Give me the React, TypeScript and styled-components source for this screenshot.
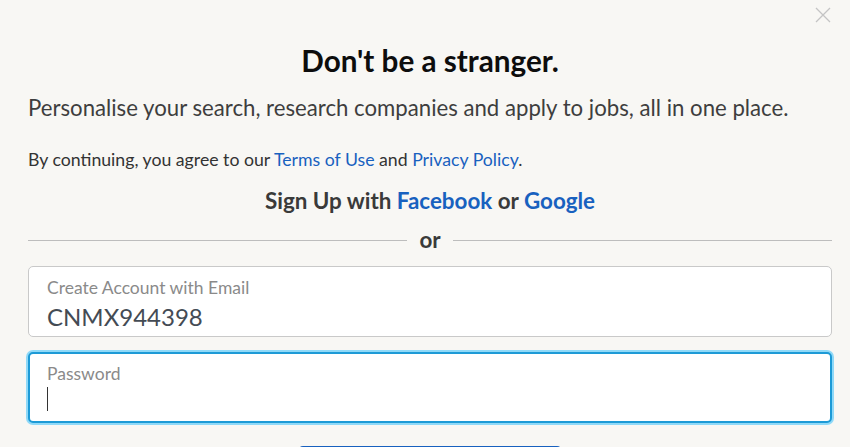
import styled, { createGlobalStyle } from "styled-components";

const GlobalStyle = createGlobalStyle`
  html, body {
    margin: 0;
    padding: 0;
    background: #f8f7f4;
    font-family: Lato, "Open Sans", sans-serif;
    overflow: hidden;
  }
`;

const Modal = styled.div`
  position: relative;
  height: 447px;
  overflow: hidden;
  padding: 0 18px 0 28px;
  box-sizing: border-box;
  display: flex;
  flex-direction: column;
`;

const Close = styled.button`
  position: absolute;
  top: 6px;
  right: 18px;
  width: 18px;
  height: 18px;
  padding: 0;
  border: none;
  background: none;
  display: flex;
`;

const Title = styled.h1`
  margin: 43px 0 0;
  text-align: center;
  font-size: 29.7px;
  font-weight: 700;
  line-height: 36px;
  color: #0d0d0d;
`;

const Lead = styled.p`
  margin: 15px 0 0;
  font-size: 22.2px;
  line-height: 28px;
  color: #3e3e3e;
`;

const Terms = styled.p`
  margin: 27px 0 0;
  font-size: 17.7px;
  line-height: 22px;
  color: #333;
`;

const Link = styled.a`
  color: #1861bf;
  text-decoration: none;
`;

const Social = styled.div`
  margin: 16px 0 0;
  text-align: center;
  font-size: 22.4px;
  font-weight: 700;
  line-height: 28px;
  color: #3a3a3a;
`;

const Divider = styled.div`
  margin: 13px 0 0;
  display: flex;
  align-items: center;
  gap: 12px;
  font-size: 22.4px;
  font-weight: 700;
  line-height: 24px;
  color: #3a3a3a;

  &::before,
  &::after {
    content: "";
    flex: 1;
    height: 1px;
    background: #bdbdbd;
  }
`;

const Fields = styled.div`
  margin: 14px 0 0;
  display: flex;
  flex-direction: column;
  gap: 15px;
`;

const Field = styled.label<{ $focused?: boolean }>`
  display: flex;
  flex-direction: column;
  height: 71px;
  flex-shrink: 0;
  box-sizing: border-box;
  padding: ${(p) => (p.$focused ? "10px 17px" : "11px 18px")};
  background: #fff;
  border-radius: 5px;
  border: ${(p) => (p.$focused ? "2px solid #1d9ad6" : "1px solid #c9c9c9")};
  box-shadow: ${(p) => (p.$focused ? "0 0 0 2px #8fd9f8" : "none")};
`;

const Label = styled.span`
  font-size: 17.5px;
  line-height: 20px;
  color: #8a8a8a;
`;

const Value = styled.span`
  margin-top: 4px;
  font-size: 24px;
  line-height: 30px;
  color: #444b54;
`;

const Caret = styled.span`
  margin-top: 3px;
  width: 1px;
  height: 29px;
  background: #333;
`;

const Submit = styled.button`
  align-self: center;
  margin: 23px 0 0;
  width: 262px;
  height: 44px;
  flex-shrink: 0;
  border: none;
  border-radius: 4px;
  background: #1861bf;
`;

const App = () => (
  <>
    <GlobalStyle />
    <Modal>
      <Close aria-label="Close">
        <svg width="18" height="18" viewBox="0 0 18 18">
          <path d="M2 2L16 16M16 2L2 16" stroke="#c4c4c4" strokeWidth="1.3" />
        </svg>
      </Close>
      <Title>Don't be a stranger.</Title>
      <Lead>Personalise your search, research companies and apply to jobs, all in one place.</Lead>
      <Terms>
        By continuing, you agree to our <Link href="#">Terms of Use</Link> and{" "}
        <Link href="#">Privacy Policy</Link>.
      </Terms>
      <Social>
        Sign Up with <Link href="#">Facebook</Link> or <Link href="#">Google</Link>
      </Social>
      <Divider>or</Divider>
      <Fields>
        <Field>
          <Label>Create Account with Email</Label>
          <Value>CNMX944398</Value>
        </Field>
        <Field $focused>
          <Label>Password</Label>
          <Caret />
        </Field>
      </Fields>
      <Submit />
    </Modal>
  </>
);

export default App;
